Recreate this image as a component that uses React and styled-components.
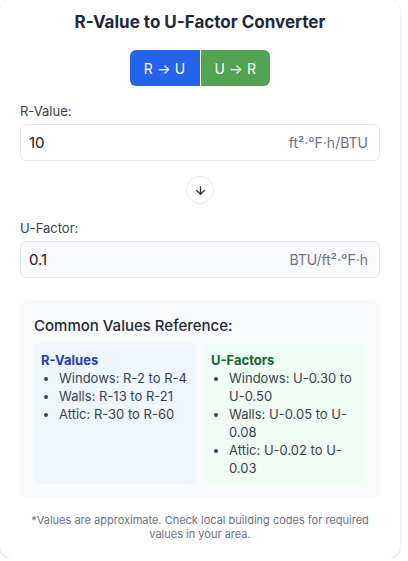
import React, { useState } from "react";
import styled, { createGlobalStyle } from "styled-components";
import { ArrowDown } from "lucide-react";

const Global = createGlobalStyle`
  html, body { margin: 0; padding: 0; background: #ffffff; }
  body { font-family: Inter, "Noto Sans", "Liberation Sans", sans-serif; color: #1f2937; }
  * { box-sizing: border-box; }
`;

const Card = styled.div`
  width: 400px;
  background: #ffffff;
  border-radius: 12px;
  box-shadow: 0 1px 3px rgba(0, 0, 0, 0.12), 0 1px 2px rgba(0, 0, 0, 0.06);
  padding: 10px 20px 17px;
  display: flex;
  flex-direction: column;
`;

const Title = styled.h1`
  margin: 0;
  font-size: 17px;
  line-height: 24px;
  font-weight: 700;
  text-align: center;
  color: #1f2937;
`;

const Toggle = styled.div`
  display: flex;
  justify-content: center;
  margin-top: 16px;
`;

const ToggleButton = styled.button`
  height: 36px;
  padding: 0 14px;
  border: none;
  font-family: inherit;
  font-size: 14px;
  color: #ffffff;
  background: ${(p) => p.$bg};
  border-radius: ${(p) => (p.$side === "left" ? "6px 0 0 6px" : "0 6px 6px 0")};
  border-left: ${(p) => (p.$side === "right" ? "1px solid #ffffff" : "none")};
  cursor: pointer;
  letter-spacing: 0.2px;
`;

const Field = styled.div`
  display: flex;
  flex-direction: column;
  gap: 3px;
  margin-top: ${(p) => p.$mt}px;
`;

const Label = styled.label`
  font-size: 13px;
  line-height: 20px;
  color: #374151;
`;

const InputBox = styled.div`
  height: 37px;
  display: flex;
  align-items: center;
  justify-content: space-between;
  padding: 0 11px 0 8px;
  border: 1px solid #e5e7eb;
  border-radius: 6px;
  background: ${(p) => (p.$readonly ? "#f9fafb" : "#ffffff")};
`;

const Value = styled.input`
  border: none;
  outline: none;
  background: transparent;
  font-family: inherit;
  font-size: 15px;
  color: #111827;
  width: 150px;
  padding: 0;
`;

const Unit = styled.span`
  font-size: 14px;
  color: #6b7280;
`;

const SwapRow = styled.div`
  display: flex;
  justify-content: center;
  margin-top: 15px;
`;

const SwapButton = styled.button`
  width: 28px;
  height: 28px;
  border-radius: 50%;
  border: 1px solid #e5e7eb;
  background: #ffffff;
  display: flex;
  align-items: center;
  justify-content: center;
  padding: 0;
  color: #1f2937;
`;

const RefBox = styled.div`
  margin-top: 22px;
  background: #f8fafc;
  border-radius: 8px;
  padding: 14px 14px 14px;
`;

const RefTitle = styled.h3`
  margin: 0 0 5px;
  font-size: 15px;
  line-height: 24px;
  font-weight: 500;
  color: #1f2937;
`;

const Columns = styled.div`
  display: grid;
  grid-template-columns: 1fr 1fr;
  gap: 8px;
`;

const Column = styled.div`
  background: ${(p) => p.$bg};
  border-radius: 4px;
  padding: 8px 8px 7px 7px;
`;

const ColHead = styled.h4`
  margin: 0;
  font-size: 13px;
  line-height: 18px;
  font-weight: 700;
  color: ${(p) => p.$color};
`;

const List = styled.ul`
  margin: 0;
  padding-left: 18px;
  list-style: disc;
`;

const Item = styled.li`
  font-size: 13px;
  line-height: 18px;
  color: #374151;
`;

const Note = styled.p`
  margin: 15px 0 0;
  font-size: 11px;
  line-height: 14px;
  color: #6b7280;
  text-align: center;
  padding: 0 10px;
`;

export default function App() {
  const [r, setR] = useState("10");
  const u = r && Number(r) ? String(Math.round((1 / Number(r)) * 10000) / 10000) : "";
  return (
    <>
      <Global />
      <Card>
        <Title>R-Value to U-Factor Converter</Title>
        <Toggle>
          <ToggleButton $side="left" $bg="#2563eb">R → U</ToggleButton>
          <ToggleButton $side="right" $bg="#53a451">U → R</ToggleButton>
        </Toggle>
        <Field $mt={15}>
          <Label>R-Value:</Label>
          <InputBox>
            <Value value={r} onChange={(e) => setR(e.target.value)} />
            <Unit>ft²·°F·h/BTU</Unit>
          </InputBox>
        </Field>
        <SwapRow>
          <SwapButton aria-label="swap">
            <ArrowDown size={13} strokeWidth={2.2} />
          </SwapButton>
        </SwapRow>
        <Field $mt={14}>
          <Label>U-Factor:</Label>
          <InputBox $readonly>
            <Value value={u} readOnly />
            <Unit>BTU/ft²·°F·h</Unit>
          </InputBox>
        </Field>
        <RefBox>
          <RefTitle>Common Values Reference:</RefTitle>
          <Columns>
            <Column $bg="#eff6ff">
              <ColHead $color="#1e40af">R-Values</ColHead>
              <List>
                <Item>Windows: R-2 to R-4</Item>
                <Item>Walls: R-13 to R-21</Item>
                <Item>Attic: R-30 to R-60</Item>
              </List>
            </Column>
            <Column $bg="#f0fdf4">
              <ColHead $color="#166534">U-Factors</ColHead>
              <List>
                <Item>Windows: U-0.30 to U-0.50</Item>
                <Item>Walls: U-0.05 to U-0.08</Item>
                <Item>Attic: U-0.02 to U-0.03</Item>
              </List>
            </Column>
          </Columns>
        </RefBox>
        <Note>*Values are approximate. Check local building codes for required values in your area.</Note>
      </Card>
    </>
  );
}
